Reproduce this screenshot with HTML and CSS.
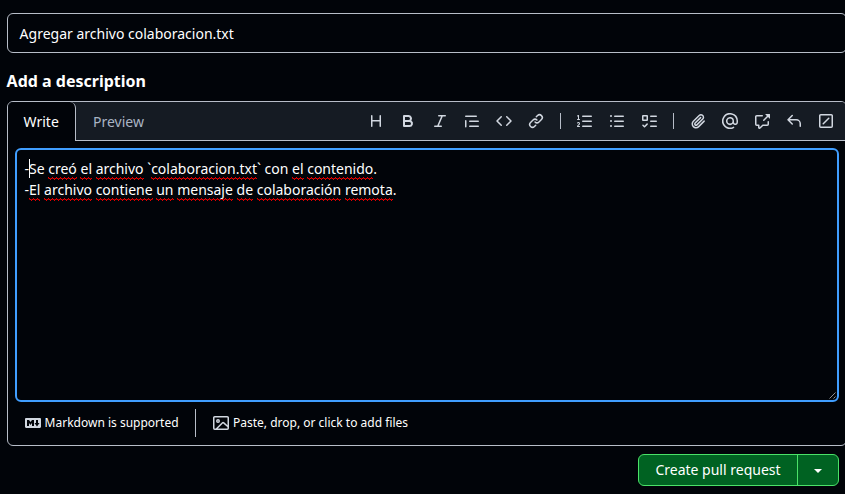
FILE: index.html
```html
<!DOCTYPE html>
<html lang="es">
<head>
<meta charset="utf-8">
<title>Create pull request</title>
<link rel="stylesheet" href="styles.css">
</head>
<body>
<main class="form">
  <div class="title-input">Agregar archivo colaboracion.txt</div>
  <h2 class="label">Add a description</h2>
  <section class="editor">
    <header class="editor-head">
      <div class="tab tab-active">Write</div>
      <div class="tab-rest">
        <div class="tab">Preview</div>
        <div class="toolbar">
          <span class="tool"><svg viewBox="0 0 16 16"><path d="M3.75 2a.75.75 0 0 1 .75.75V7h7V2.75a.75.75 0 0 1 1.5 0v10.5a.75.75 0 0 1-1.5 0V8.5h-7v4.75a.75.75 0 0 1-1.5 0V2.75A.75.75 0 0 1 3.75 2Z"/></svg></span>
          <span class="tool"><svg viewBox="0 0 16 16"><path d="M4 2h4.5a3.501 3.501 0 0 1 2.852 5.53A3.499 3.499 0 0 1 9.5 14H4a1 1 0 0 1-1-1V3a1 1 0 0 1 1-1Zm1 7v3h4.5a1.5 1.5 0 0 0 0-3Zm3.5-2a1.5 1.5 0 0 0 0-3H5v3Z"/></svg></span>
          <span class="tool"><svg viewBox="0 0 16 16"><path d="M6 2.75A.75.75 0 0 1 6.75 2h6.5a.75.75 0 0 1 0 1.5h-2.505l-3.858 9H9.25a.75.75 0 0 1 0 1.5h-6.5a.75.75 0 0 1 0-1.5h2.505l3.858-9H6.75A.75.75 0 0 1 6 2.75Z"/></svg></span>
          <span class="tool"><svg viewBox="0 0 16 16"><path d="M1.75 2.5h10.5a.75.75 0 0 1 0 1.5H1.75a.75.75 0 0 1 0-1.5Zm4 5h8.5a.75.75 0 0 1 0 1.5h-8.5a.75.75 0 0 1 0-1.5Zm0 5h8.5a.75.75 0 0 1 0 1.5h-8.5a.75.75 0 0 1 0-1.5ZM2.5 7.75v6a.75.75 0 0 1-1.5 0v-6a.75.75 0 0 1 1.5 0Z"/></svg></span>
          <span class="tool"><svg viewBox="0 0 16 16"><path d="m11.28 3.22 4.25 4.25a.75.75 0 0 1 0 1.06l-4.25 4.25a.749.749 0 0 1-1.275-.326.749.749 0 0 1 .215-.734L13.94 8l-3.72-3.72a.749.749 0 0 1 .326-1.275.749.749 0 0 1 .734.215Zm-6.56 0a.751.751 0 0 1 1.042.018.751.751 0 0 1 .018 1.042L2.06 8l3.72 3.72a.749.749 0 0 1-.326 1.275.749.749 0 0 1-.734-.215L.47 8.53a.75.75 0 0 1 0-1.06Z"/></svg></span>
          <span class="tool"><svg viewBox="0 0 16 16"><path d="m7.775 3.275 1.25-1.25a3.5 3.5 0 1 1 4.95 4.95l-2.5 2.5a3.5 3.5 0 0 1-4.95 0 .751.751 0 0 1 .018-1.042.751.751 0 0 1 1.042-.018 1.998 1.998 0 0 0 2.83 0l2.5-2.5a2.002 2.002 0 0 0-2.83-2.83l-1.25 1.25a.751.751 0 0 1-1.042-.018.751.751 0 0 1-.018-1.042Zm-4.69 9.64a1.998 1.998 0 0 0 2.83 0l1.25-1.25a.751.751 0 0 1 1.042.018.751.751 0 0 1 .018 1.042l-1.25 1.25a3.5 3.5 0 1 1-4.95-4.95l2.5-2.5a3.5 3.5 0 0 1 4.95 0 .751.751 0 0 1-.018 1.042.751.751 0 0 1-1.042.018 1.998 1.998 0 0 0-2.83 0l-2.5 2.5a1.998 1.998 0 0 0 0 2.83Z"/></svg></span>
          <span class="divider"></span>
          <span class="tool"><svg viewBox="0 0 16 16"><path d="M5 3.25a.75.75 0 0 1 .75-.75h8.5a.75.75 0 0 1 0 1.5h-8.5A.75.75 0 0 1 5 3.25Zm0 5a.75.75 0 0 1 .75-.75h8.5a.75.75 0 0 1 0 1.5h-8.5A.75.75 0 0 1 5 8.25Zm0 5a.75.75 0 0 1 .75-.75h8.5a.75.75 0 0 1 0 1.5h-8.5a.75.75 0 0 1-.75-.75ZM.924 10.32a.5.5 0 0 1-.851-.525l.001-.001.001-.002.002-.004.007-.011c.097-.144.215-.273.348-.384.228-.19.588-.392 1.068-.392.468 0 .858.181 1.126.484.259.294.377.673.377 1.038 0 .987-.686 1.495-1.156 1.845l-.047.035c-.303.225-.522.4-.654.597h1.357a.5.5 0 0 1 0 1H.5a.5.5 0 0 1-.5-.5c0-1.005.692-1.52 1.167-1.875l.035-.025c.531-.396.8-.625.8-1.078a.57.57 0 0 0-.128-.376C1.806 10.068 1.695 10 1.5 10a.658.658 0 0 0-.429.163.835.835 0 0 0-.144.153ZM2.003 2.5V6h.503a.5.5 0 0 1 0 1H.5a.5.5 0 0 1 0-1h.503V3.308l-.28.14a.5.5 0 0 1-.446-.895l1.003-.5a.5.5 0 0 1 .723.447Z"/></svg></span>
          <span class="tool"><svg viewBox="0 0 16 16"><path d="M5.75 2.5h8.5a.75.75 0 0 1 0 1.5h-8.5a.75.75 0 0 1 0-1.5Zm0 5h8.5a.75.75 0 0 1 0 1.5h-8.5a.75.75 0 0 1 0-1.5Zm0 5h8.5a.75.75 0 0 1 0 1.5h-8.5a.75.75 0 0 1 0-1.5ZM2 14a1 1 0 1 1 0-2 1 1 0 0 1 0 2Zm1-6a1 1 0 1 1-2 0 1 1 0 0 1 2 0ZM2 4a1 1 0 1 1 0-2 1 1 0 0 1 0 2Z"/></svg></span>
          <span class="tool"><svg viewBox="0 0 16 16"><path d="M2 2h4a1 1 0 0 1 1 1v4a1 1 0 0 1-1 1H2a1 1 0 0 1-1-1V3a1 1 0 0 1 1-1Zm4.655 8.595a.75.75 0 0 1 0 1.06L4.03 14.28a.75.75 0 0 1-1.06 0l-1.5-1.5a.749.749 0 0 1 .326-1.275.749.749 0 0 1 .734.215l.97.97 2.095-2.095a.75.75 0 0 1 1.06 0ZM9.75 2.5h5.5a.75.75 0 0 1 0 1.5h-5.5a.75.75 0 0 1 0-1.5Zm0 5h5.5a.75.75 0 0 1 0 1.5h-5.5a.75.75 0 0 1 0-1.5Zm0 5h5.5a.75.75 0 0 1 0 1.5h-5.5a.75.75 0 0 1 0-1.5Zm-7.25-9v3h3v-3Z"/></svg></span>
          <span class="divider"></span>
          <span class="tool"><svg viewBox="0 0 16 16"><path d="M12.212 3.02a1.753 1.753 0 0 0-2.478.003l-5.83 5.83a3.007 3.007 0 0 0-.88 2.127c0 .795.315 1.551.88 2.116.567.567 1.333.89 2.126.89.79 0 1.548-.321 2.116-.89l5.48-5.48a.75.75 0 0 1 1.061 1.06l-5.48 5.48a4.492 4.492 0 0 1-3.177 1.33c-1.2 0-2.345-.487-3.187-1.33a4.483 4.483 0 0 1-1.32-3.177c0-1.195.475-2.341 1.32-3.186l5.83-5.83a3.25 3.25 0 0 1 5.553 2.297c0 .863-.343 1.691-.953 2.301L7.439 12.39c-.375.377-.884.59-1.416.593a1.998 1.998 0 0 1-1.412-.593 1.992 1.992 0 0 1 0-2.828l5.48-5.48a.751.751 0 0 1 1.042.018.751.751 0 0 1 .018 1.042l-5.48 5.48a.492.492 0 0 0 0 .707.499.499 0 0 0 .352.154.51.51 0 0 0 .356-.154l5.833-5.827a1.755 1.755 0 0 0 0-2.481Z"/></svg></span>
          <span class="tool"><svg viewBox="0 0 16 16"><path d="M4.75 2.37a6.501 6.501 0 0 0 6.5 11.26.75.75 0 0 1 .75 1.298A7.999 7.999 0 0 1 .989 4.148 8 8 0 0 1 16 7.75v1.5a2.75 2.75 0 0 1-5.072 1.475 3.999 3.999 0 0 1-6.65-4.19A4 4 0 0 1 12 8v1.25a1.25 1.25 0 0 0 2.5 0V7.867a6.5 6.5 0 0 0-9.75-5.496ZM10.5 8a2.5 2.5 0 1 0-5 0 2.5 2.5 0 0 0 5 0Z"/></svg></span>
          <span class="tool"><svg viewBox="0 0 16 16"><path d="M2.75 3.5a.25.25 0 0 0-.25.25v7.5c0 .138.112.25.25.25h2a.75.75 0 0 1 .75.75v2.19l2.72-2.72a.749.749 0 0 1 .53-.22h4.5a.25.25 0 0 0 .25-.25v-2.5a.75.75 0 0 1 1.5 0v2.5A1.75 1.75 0 0 1 13.25 13H9.06l-2.573 2.573A1.458 1.458 0 0 1 4 14.543V13H2.75A1.75 1.75 0 0 1 1 11.25v-7.5C1 2.784 1.784 2 2.75 2h5.5a.75.75 0 0 1 0 1.5ZM16 1.25v4.146a.25.25 0 0 1-.427.177L14.03 4.03l-3.75 3.75a.749.749 0 0 1-1.275-.326.749.749 0 0 1 .215-.734l3.75-3.75-1.543-1.543A.25.25 0 0 1 11.604 1h4.146a.25.25 0 0 1 .25.25Z"/></svg></span>
          <span class="tool"><svg viewBox="0 0 16 16"><path d="M6.78 1.97a.75.75 0 0 1 0 1.06L3.81 6h6.44A4.75 4.75 0 0 1 15 10.75v2.5a.75.75 0 0 1-1.5 0v-2.5a3.25 3.25 0 0 0-3.25-3.25H3.81l2.97 2.97a.749.749 0 0 1-.326 1.275.749.749 0 0 1-.734-.215L1.47 7.28a.75.75 0 0 1 0-1.06l4.25-4.25a.75.75 0 0 1 1.06 0Z"/></svg></span>
          <span class="tool"><svg viewBox="0 0 16 16"><path d="M13.25 1c.966 0 1.75.784 1.75 1.75v10.5A1.75 1.75 0 0 1 13.25 15H2.75A1.75 1.75 0 0 1 1 13.25V2.75C1 1.784 1.784 1 2.75 1ZM2.75 2.5a.25.25 0 0 0-.25.25v10.5c0 .138.112.25.25.25h10.5a.25.25 0 0 0 .25-.25V2.75a.25.25 0 0 0-.25-.25Zm8.53 3.28-5.5 5.5a.75.75 0 1 1-1.06-1.06l5.5-5.5a.75.75 0 1 1 1.06 1.06Z"/></svg></span>
        </div>
      </div>
    </header>
    <div class="textarea">
      <p>-<i class="caret"></i>Se <u>creó</u> <u>el</u> <u>archivo</u> `<u>colaboracion.txt</u>` con <u>el</u> <u>contenido</u>.</p>
      <p>-<u>El</u> <u>archivo</u> <u>contiene</u> <u>un</u> <u>mensaje</u> <u>de</u> <u>colaboración</u> <u>remota</u>.</p>
      <svg class="grip" viewBox="0 0 7 7"><path d="M.5 6.5l6-6M4.5 6.5l2-2"/></svg>
    </div>
    <footer class="editor-foot">
      <span class="hint"><svg viewBox="0 0 16 16"><path d="M14.85 3c.63 0 1.15.52 1.14 1.15v7.7c0 .63-.51 1.15-1.15 1.15H1.15C.52 13 0 12.48 0 11.84V4.15C0 3.52.52 3 1.15 3ZM9 11V5H7L5.5 7 4 5H2v6h2V8l1.5 1.92L7 8v3Zm2.99.5L14.5 8H13V5h-2v3H9.5Z"/></svg><span class="hint-text">Markdown is supported</span></span>
      <span class="foot-divider"></span>
      <span class="hint hint-files"><svg viewBox="0 0 16 16"><path d="M16 13.25A1.75 1.75 0 0 1 14.25 15H1.75A1.75 1.75 0 0 1 0 13.25V2.75C0 1.784.784 1 1.75 1h12.5c.966 0 1.75.784 1.75 1.75ZM1.75 2.5a.25.25 0 0 0-.25.25v10.5c0 .138.112.25.25.25h.94l.03-.03 6.077-6.078a1.75 1.75 0 0 1 2.412-.06L14.5 10.31V2.75a.25.25 0 0 0-.25-.25Zm12.5 11a.25.25 0 0 0 .25-.25v-.917l-4.298-3.889a.25.25 0 0 0-.344.009L4.81 13.5ZM7 6a2 2 0 1 1-3.999.001A2 2 0 0 1 7 6ZM5.5 6a.5.5 0 1 0-1 0 .5.5 0 0 0 1 0Z"/></svg><span class="hint-text">Paste, drop, or click to add files</span></span>
    </footer>
  </section>
  <div class="actions">
    <div class="split">
      <span class="split-main">Create pull request</span>
      <span class="split-menu"><i class="chevron"></i></span>
    </div>
  </div>
</main>
</body>
</html>
```
FILE: styles.css
```css
* { box-sizing: border-box; }
body {
  margin: 0;
  height: 494px;
  overflow: hidden;
  background: #010409;
  color: #fff;
  font: 14px/21px "Noto Sans", sans-serif;
}
svg { display: block; width: 16px; height: 16px; fill: #d1d7e0; }
.form { width: 840px; margin-left: 7px; padding-top: 13px; }
.title-input {
  height: 40px;
  padding: 9px 11.6px;
  border: 1px solid #b7bdc8;
  border-radius: 6px;
}
.label { margin: 16px 0 8px -.4px; font-size: 16px; line-height: 24px; font-weight: 700; }
.editor {
  height: 345px;
  border: 1px solid #b7bdc8;
  border-radius: 6px;
}
.editor-head { display: flex; height: 39px; background: #151b23; border-radius: 5px 5px 0 0; }
.tab { padding: 9px 17px; color: #a9b4c4; }
.tab-active {
  width: 68px;
  padding: 9px 0 9px 15.6px;
  color: #fff;
  background: #010409;
  border-right: 1px solid #b7bdc8;
  border-radius: 6px 6px 0 0;
}
.tab-rest {
  flex: 1;
  display: flex;
  justify-content: space-between;
  border-bottom: 1px solid #b7bdc8;
}
.toolbar { display: flex; align-items: center; padding-right: 4px; height: 38px; }
.tool { width: 32px; display: flex; justify-content: center; }
.divider { width: 1px; height: 16px; margin: 0 8px; background: #b7bdc8; }
.textarea {
  position: relative;
  height: 254px;
  margin: 7px 7px 0;
  padding: 8px 7.5px;
  border: 2px solid #409eff;
  border-radius: 6px;
}
.textarea p { margin: 0; line-height: 21px; white-space: pre; }
.textarea u {
  text-decoration: none;
  padding-bottom: 2px;
  background: url("data:image/svg+xml,%3Csvg xmlns='http://www.w3.org/2000/svg' width='4' height='3'%3E%3Cpath d='M0 0h1v1h-1zM1 1h1v1h-1zM2 2h1v1h-1zM3 1h1v1h-1z' fill='%23e80000'/%3E%3Cpath d='M0 1h1v1h-1zM2 1h1v1h-1z' fill='%23800000'/%3E%3C/svg%3E") repeat-x left bottom;
}
.caret {
  position: absolute;
  width: 1px;
  height: 19px;
  margin: 1px 0 0 -.5px;
  background: #fff;
}
.grip {
  position: absolute;
  right: 1px;
  bottom: 1px;
  width: 7px;
  height: 7px;
  fill: none;
  stroke: #b0b0b0;
  stroke-width: .8;
}
.editor-foot { display: flex; align-items: center; height: 42px; padding-left: 17px; font-size: 12px; }
.hint { display: flex; align-items: center; gap: 3.6px; white-space: nowrap; }
.hint-files { gap: 4.1px; }
.hint-text { padding-bottom: 2px; }
.foot-divider { width: 1px; height: 28px; margin: 0 17px 0 16.4px; background: #b7bdc8; }
.actions { display: flex; justify-content: flex-end; padding: 8px 8px 0 0; }
.split {
  display: flex;
  height: 32px;
  background: #006222;
  border: 1px solid #4ae168;
  border-radius: 6px;
}
.split-main { width: 159px; padding: 4px 0; text-align: center; border-right: 1px solid #4ae168; }
.split-menu { width: 40px; display: flex; align-items: center; justify-content: center; }
.chevron { border: 4px solid transparent; border-top-color: #fff; border-bottom: 0; margin-top: 2px; }
```
